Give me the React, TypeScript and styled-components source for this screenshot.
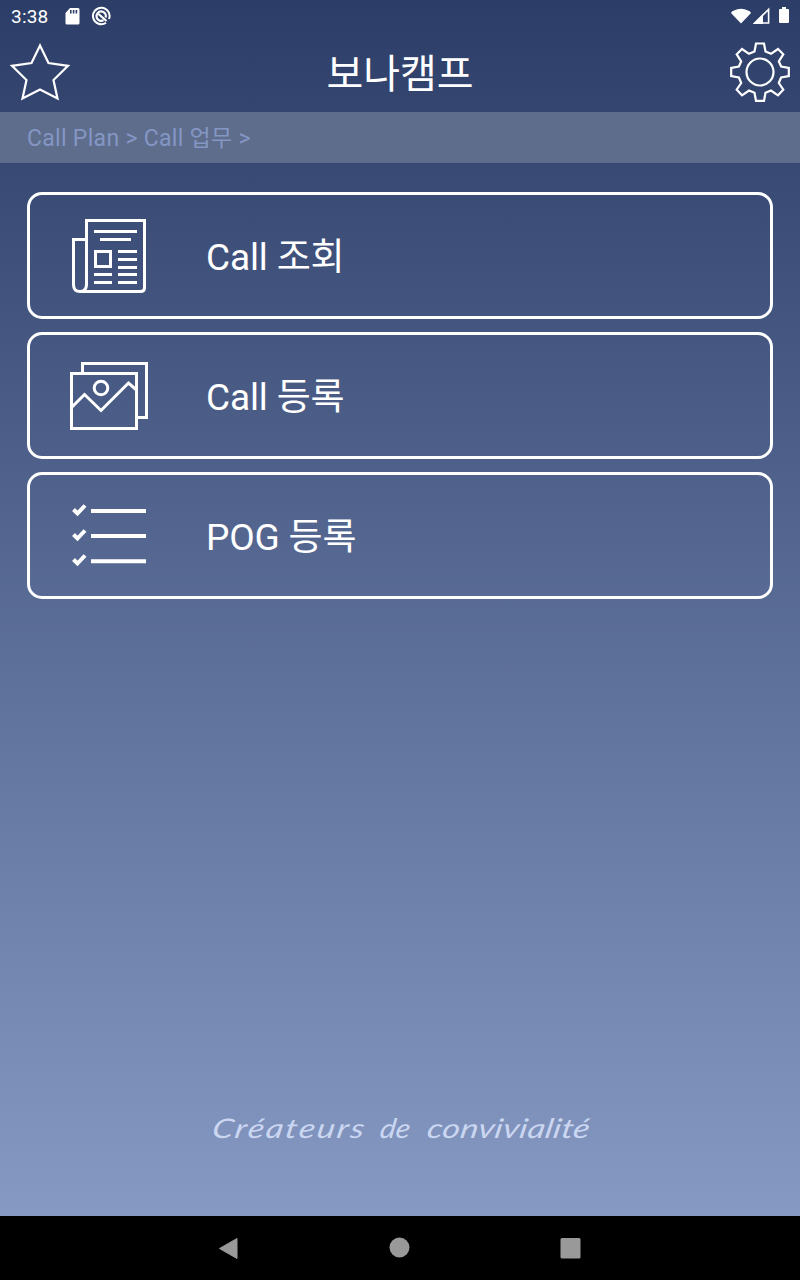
import React from 'react';
import styled, { createGlobalStyle } from 'styled-components';

const GlobalStyle = createGlobalStyle`
  * { box-sizing: border-box; }
  body { margin: 0; background: #000; }
  button { font: inherit; color: inherit; background: none; padding: 0; border: 0; }
  svg { display: block; flex: none; }
`;

const Screen = styled.div`
  display: flex;
  flex-direction: column;
  width: 800px;
  height: 1280px;
  overflow: hidden;
  color: #fff;
  font-family: Roboto, 'Noto Sans CJK KR', sans-serif;
`;

const AppArea = styled.div`
  display: flex;
  flex-direction: column;
  height: 1216px;
  background: linear-gradient(#2c3e68, #8699c3);
`;

const StatusBar = styled.div`
  display: flex;
  align-items: center;
  height: 32px;
  padding: 0 10px 0 11px;
`;

const Clock = styled.span`
  width: 53px;
  padding-top: 1px;
  font-size: 19px;
  line-height: 32px;
  letter-spacing: 0.2px;
`;

const Notifications = styled.div`
  display: flex;
  flex: 1;
  align-items: center;
  gap: 10px;
`;

const Header = styled.header`
  display: flex;
  align-items: center;
  justify-content: space-between;
  height: 80px;
  padding: 0 8px;
`;

const Title = styled.h1`
  margin: 0;
  padding-top: 5px;
  font-size: 40px;
  font-weight: 400;
  line-height: 75px;
`;

const Breadcrumb = styled.nav`
  height: 51px;
  padding: 1px 0 0 27px;
  background: #5e6d8c;
  color: #8496c4;
  font-size: 23px;
  line-height: 51px;
  letter-spacing: 0.3px;
`;

const Menu = styled.main`
  display: flex;
  flex: 1;
  flex-direction: column;
  gap: 13px;
  padding: 29px 27px 0;
`;

const MenuCard = styled.button`
  display: flex;
  align-items: center;
  height: 127px;
  padding-left: 37px;
  border: 3px solid #fff;
  border-radius: 15px;
  text-align: left;
`;

const CardLabel = styled.span`
  margin-left: 53px;
  padding-top: 5px;
  font-size: 37px;
  line-height: 50px;
  letter-spacing: -0.15px;
`;

const Tagline = styled.footer`
  display: grid;
  grid-template-columns: 169px 46px 165px;
  height: 120px;
  padding: 10px 0 0 203px;
  color: #cbd7f1;
  font-family: Lato, sans-serif;
  font-size: 27px;
  font-style: italic;
  font-weight: 400;
  line-height: 44px;
`;

const Word = styled.span<{ $spacing: number; $stretch: number }>`
  white-space: nowrap;
  letter-spacing: ${(p) => p.$spacing}px;
  transform: scaleX(${(p) => p.$stretch}) skewX(-8deg);
  transform-origin: 0 70%;
`;

const NavBar = styled.div`
  display: flex;
  align-items: center;
  justify-content: center;
  gap: 149px;
  height: 64px;
  background: #000;
`;

const line = { fill: 'none', stroke: '#fff' } as const;

const SdCard = () => (
  <svg width="17" height="20" viewBox="0 0 17 20">
    <path fill="#fff" fillRule="evenodd" d="M6 2h8q1.500 0 1.500 1.500v13.500q0 1.500-1.500 1.500H3q-1.500 0-1.500-1.500V7zM6 4v3.500h1.600V4zM8.800 4v3.500h1.600V4zM11.600 4v3.500h1.600V4z" />
  </svg>
);

const ScanMark = () => (
  <svg width="20" height="20" viewBox="0 0 20 20" {...line}>
    <path d="M15 16.800A8.300 8.300 0 1 1 18 13" strokeWidth="2" />
    <path d="M12.500 14.200A4.700 4.700 0 1 1 14.700 11.500M7.500 8l8 7" strokeWidth="2.200" />
  </svg>
);

const SignalIcons = () => (
  <svg width="60" height="22" viewBox="0 0 60 22">
    <path fill="#fff" d="M1 8Q1.500 6 4 5.500Q11 2 18 5.500Q20.500 6 21 8L11 18.500z" />
    <path {...line} strokeWidth="1.600" d="M24.700 18L38.600 4.500V18z" />
    <path fill="#fff" d="M23 19l10-10v10z" />
    <path fill="#fff" d="M52 2h4v2h2q1 0 1 1v12q0 1-1 1h-8q-1 0-1-1V5q0-1 1-1h2z" />
  </svg>
);

const Star = () => (
  <svg width="64" height="64" viewBox="8 40 64 64" {...line} strokeWidth="2.200">
    <path d="M40 45.500l8.500 17.500 19.500 2.800-14.500 14.200 4 18.500L40 89.500l-17.500 9 4-18.500L12 65.800l19.500-2.800z" />
  </svg>
);

const Gear = () => (
  <svg width="64" height="64" viewBox="728 40 64 64" {...line} strokeWidth="2.200">
    <circle cx="760" cy="72" r="13.500" />
    <path d="M756 43.500h8l1.500 8 5.500 2.300 7-4.800 5.300 5.300-4.500 7 2.300 5.200 7.700 1.500v8l-7.700 1.500-2.300 5.500 4.500 6.700-5.300 5.600-7-4.800-5.500 2.300-1.500 8h-8l-1.500-8-5.500-2.300-7 4.800-5.300-5.600 4.500-6.700-2.300-5.500-7.700-1.500v-8l7.700-1.500 2.300-5.200-4.500-7 5.300-5.300 7 4.800 5.500-2.300z" />
  </svg>
);

const Newspaper = () => (
  <svg width="86" height="86" viewBox="67 213 86 86" {...line} strokeWidth="3">
    <path d="M86.500 286V220.500h58V288q0 3.500-4 3.500H80q-6.500 0-6.500-7V239.500h13M86.500 284q0 7.500-6.500 7.500" />
    <path d="M94 231.500h43M100 239.500h31M118 251.500h19M118 259.500h19M118 267.500h19M94 274.500h18M118 274.500h19M94 282.500h18M118 282.500h19M95.500 251.500h15v15h-15z" />
  </svg>
);

const Pictures = () => (
  <svg width="86" height="86" viewBox="67 353 86 86" {...line} strokeWidth="3">
    <path d="M71.500 373.500h65v55h-65zM82.500 373v-9.500h64v54h-9" />
    <circle cx="101" cy="388" r="6.800" />
    <path d="M72 407l12.500-12.500 16.500 16 27.500-27.500 8 7" />
  </svg>
);

const Checklist = () => (
  <svg width="86" height="86" viewBox="67 493 86 86" {...line} strokeWidth="4">
    <path d="M91 511h55M91 536h55M91 561.300h55M73.500 509.500l4 4 7.500-8M73.500 534.500l4 4 7.500-8M73.500 559.500l4 4 7.500-8" />
  </svg>
);

const NavBack = () => (
  <svg width="22" height="24" viewBox="0 0 22 24">
    <path fill="#999" stroke="#999" strokeLinejoin="round" d="M1.500 12.500L19 2.500v20z" />
  </svg>
);
const NavHome = () => (
  <svg width="22" height="24" viewBox="0 0 22 24"><circle cx="10.500" cy="11.500" r="10" fill="#999" /></svg>
);
const NavRecent = () => (
  <svg width="22" height="24" viewBox="0 0 22 24"><rect x=".5" y="2" width="20" height="20.500" rx="1.500" fill="#999" /></svg>
);

const items = [
  { label: 'Call 조회', Icon: Newspaper },
  { label: 'Call 등록', Icon: Pictures },
  { label: 'POG 등록', Icon: Checklist },
];

export default function App() {
  return (
    <Screen>
      <GlobalStyle />
      <AppArea>
        <StatusBar>
          <Clock>3:38</Clock>
          <Notifications><SdCard /><ScanMark /></Notifications>
          <SignalIcons />
        </StatusBar>
        <Header>
          <button><Star /></button>
          <Title>보나캠프</Title>
          <button><Gear /></button>
        </Header>
        <Breadcrumb>Call Plan &gt; Call 업무 &gt;</Breadcrumb>
        <Menu>
          {items.map(({ label, Icon }) => (
            <MenuCard key={label}><Icon /><CardLabel>{label}</CardLabel></MenuCard>
          ))}
        </Menu>
        <Tagline>
          <Word $spacing={1.6} $stretch={1.25}>Créateurs</Word>
          <Word $spacing={0} $stretch={1.1}>de</Word>
          <Word $spacing={0.3} $stretch={1.25}>convivialité</Word>
        </Tagline>
      </AppArea>
      <NavBar><NavBack /><NavHome /><NavRecent /></NavBar>
    </Screen>
  );
}
